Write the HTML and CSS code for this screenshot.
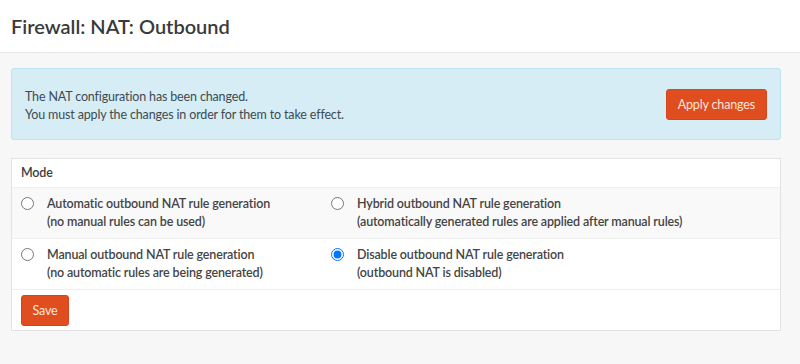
FILE: index.html
```html
<!DOCTYPE html>
<html lang="en">
<head>
    <meta charset="UTF-8">
    <meta name="viewport" content="width=device-width, initial-scale=1.0">
    <title>Firewall: NAT: Outbound</title>
    <link rel="stylesheet" href="styles.css">
</head>
<body>
    <header class="page-head">
        <h1>Firewall: NAT: Outbound</h1>
    </header>
    <main class="content">
        <div class="alert">
            <p>The NAT configuration has been changed.<br>You must apply the changes in order for them to take effect.</p>
            <button class="btn">Apply changes</button>
        </div>

        <form class="panel">
            <div class="panel-head">Mode</div>
            <div class="mode-row striped">
                <label class="opt">
                    <input type="radio" name="mode" value="automatic">
                    <span>Automatic outbound NAT rule generation<br>(no manual rules can be used)</span>
                </label>
                <label class="opt">
                    <input type="radio" name="mode" value="hybrid">
                    <span>Hybrid outbound NAT rule generation<br>(automatically generated rules are applied after manual rules)</span>
                </label>
            </div>
            <div class="mode-row">
                <label class="opt">
                    <input type="radio" name="mode" value="advanced">
                    <span>Manual outbound NAT rule generation<br>(no automatic rules are being generated)</span>
                </label>
                <label class="opt">
                    <input type="radio" name="mode" value="disabled" checked>
                    <span>Disable outbound NAT rule generation<br>(outbound NAT is disabled)</span>
                </label>
            </div>
            <div class="panel-foot">
                <button type="button" class="btn btn-save">Save</button>
            </div>
        </form>
    </main>
</body>
</html>
```

FILE: styles.css
```css
body {
    font-family: Lato, "Noto Sans", sans-serif;
    font-size: 12.5px;
    letter-spacing: -0.15px;
    background-color: #f7f7f7;
    color: #3e3e3e;
    margin: 0;
    padding: 0;
}
.page-head {
    background: #fff;
    border-bottom: 1px solid #e6e6e6;
    height: 52px;
    padding: 0 11px;
    display: flex;
    align-items: center;
}
.page-head h1 {
    margin: 0;
    font-size: 20px;
    font-weight: 600;
    letter-spacing: 0;
    color: #3a3a3a;
}
.content {
    padding: 15px 19px 0 11px;
}
.alert {
    display: flex;
    justify-content: space-between;
    align-items: center;
    height: 70px;
    padding: 0 13px;
    background: #d6edf6;
    border: 1px solid #bce4ef;
    border-radius: 3px;
    color: #3e4a50;
}
.alert p {
    margin: 4px 0 0;
    line-height: 18px;
}
.btn {
    font-family: inherit;
    font-size: 12.5px;
    letter-spacing: -0.15px;
    color: #fbe5dc;
    background-color: #e04d1f;
    border: 1px solid #d44718;
    border-radius: 3px;
    height: 31px;
    padding: 0 11px;
    cursor: pointer;
}
.panel {
    margin-top: 18px;
    background: #fff;
    border: 1px solid #e3e3e3;
}
.panel-head {
    height: 28px;
    line-height: 28px;
    padding: 0 9px;
    font-weight: 600;
    border-bottom: 1px solid #eeeeee;
}
.mode-row {
    display: grid;
    grid-template-columns: 310px 1fr;
    height: 50px;
    align-items: center;
    border-bottom: 1px solid #eeeeee;
    padding: 0 9px;
}
.striped {
    background: #f9f9f9;
}
.opt {
    display: flex;
    align-items: flex-start;
    gap: 13px;
    font-weight: 600;
    line-height: 18px;
    color: #444;
}
.opt input {
    margin: 2px 0 0 0;
    width: 13px;
    height: 13px;
}
.panel-foot {
    padding: 5px 9px 4px;
}
.btn-save {
    width: 48px;
    padding: 0;
}
```
